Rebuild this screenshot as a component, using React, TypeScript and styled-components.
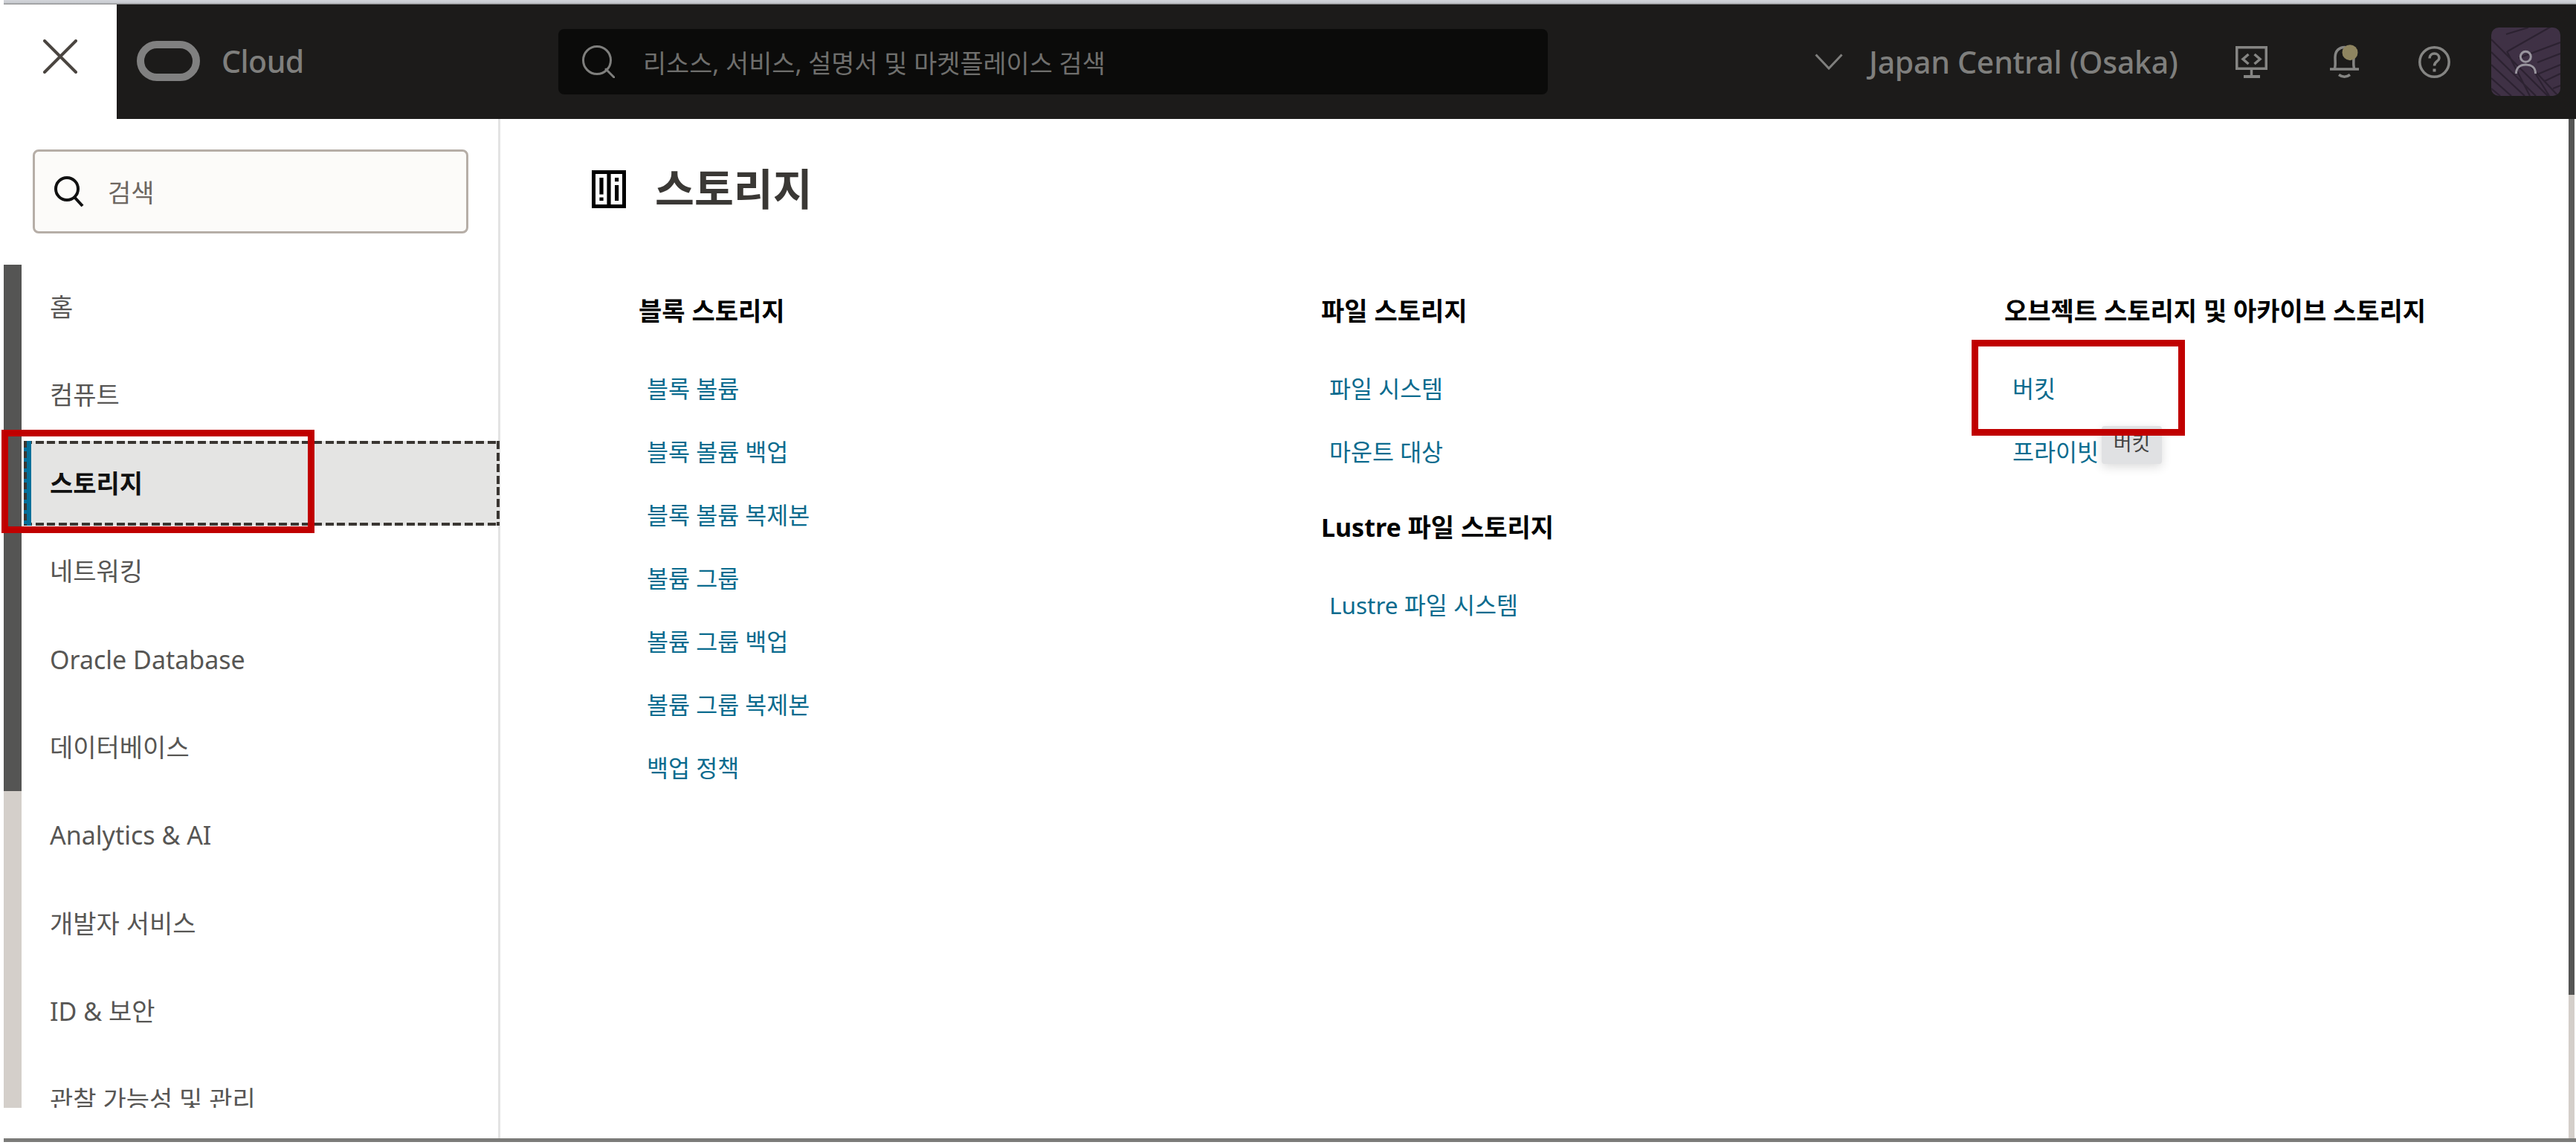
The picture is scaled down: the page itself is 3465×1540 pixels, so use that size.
import React from "react";
import styled, { createGlobalStyle } from "styled-components";

const Global = createGlobalStyle`
  html, body { margin: 0; padding: 0; background: #fff; }
  * { box-sizing: border-box; }
  body { font-family: "Noto Sans", "Noto Sans CJK KR", sans-serif; }
`;

const Page = styled.div`
  width: 3465px;
  height: 1540px;
  padding: 0 0 4px 5px;
  display: flex;
  flex-direction: column;
  overflow: hidden;
  background: #fff;
`;
const TopStripe = styled.div`
  height: 6px;
  flex: none;
  background: linear-gradient(#d3d5da 0, #c8cbd0 65%, #7d7d7d 100%);
`;
const Header = styled.header`
  height: 154px;
  flex: none;
  display: flex;
`;
const CloseCell = styled.button`
  width: 152px;
  flex: none;
  border: 0;
  padding: 0 0 14px 0;
  background: #fff;
  display: flex;
  align-items: center;
  justify-content: center;
`;
const Bar = styled.div`
  flex: 1;
  background: #1c1b1a;
  display: flex;
  align-items: center;
  position: relative;
`;
const Brand = styled.div`
  width: 594px;
  flex: none;
  padding-left: 27px;
  display: flex;
  align-items: center;
  gap: 29px;
  margin-top: -3px;
`;
const BrandText = styled.span`
  font-size: 41px;
  line-height: 50px;
  font-weight: 500;
  color: #7f7f7d;
  letter-spacing: -0.5px;
`;
const GlobalSearch = styled.div`
  width: 1331px;
  height: 88px;
  flex: none;
  border-radius: 8px;
  background: #0b0b0a;
  padding-left: 32px;
  display: flex;
  align-items: center;
  gap: 38px;
`;
const SearchHint = styled.span`
  font-size: 33.8px;
  color: #6f6f6d;
`;
const Tools = styled.div`
  flex: 1;
  display: flex;
  align-items: center;
`;
const Region = styled.div`
  margin-left: 359px;
  display: flex;
  align-items: center;
  gap: 35px;
`;
const RegionText = styled.span`
  font-size: 41px;
  line-height: 52px;
  font-weight: 500;
  color: #7f7f7d;
  letter-spacing: -0.25px;
`;
const ToolIcon = styled.span<{ $gap: number }>`
  display: flex;
  margin-left: ${(p) => p.$gap}px;
`;
const Avatar = styled.div`
  width: 93px;
  height: 92px;
  margin-left: 55px;
  border-radius: 10px;
  overflow: hidden;
  background: #3f3145;
  flex: none;
  svg { display: block; }
`;

const Body = styled.div`
  flex: 1;
  display: flex;
  min-height: 0;
`;
const Sidebar = styled.aside`
  width: 668px;
  flex: none;
  border-right: 3px solid #e3e3e3;
  display: flex;
  flex-direction: column;
`;
const SearchBox = styled.div`
  width: 586px;
  height: 113px;
  flex: none;
  margin: 41px 0 42px 39px;
  border: 3px solid #b6aea7;
  border-radius: 8px;
  background: #fcfbf9;
  padding-left: 26px;
  display: flex;
  align-items: center;
  gap: 32px;
`;
const SearchPlaceholder = styled.span`
  font-size: 34px;
  color: #6d6761;
`;
const NavArea = styled.div`
  display: flex;
  height: 1134px;
  flex: none;
`;
const Track = styled.div<{ $width: number; $height: number }>`
  width: ${(p) => p.$width}px;
  height: ${(p) => p.$height}px;
  flex: none;
  background: #d4cfca;
`;
const EdgeTrack = styled(Track)`
  margin-right: 2px;
`;
const Thumb = styled.div<{ $height: number }>`
  height: ${(p) => p.$height}px;
  background: #555554;
`;
const NavList = styled.nav`
  flex: 1;
  padding-left: 3px;
  display: flex;
  flex-direction: column;
  gap: 4.4px;
`;
const dash = (dir: string) =>
  `repeating-linear-gradient(${dir}, #3a3632 0 11px, transparent 11px 15.6px)`;
const NavRow = styled.div<{ $active?: boolean; $clip?: boolean }>`
  position: relative;
  width: 640px;
  height: ${(p) => (p.$clip ? "68px" : "114px")};
  flex: none;
  padding-left: 31px;
  border: 4px solid transparent;
  ${(p) => p.$clip && "border-bottom: 0;"}
  ${(p) =>
    p.$active
      ? `background:
          ${dash("90deg")} top / 100% 4px no-repeat,
          ${dash("90deg")} bottom / 100% 4px no-repeat,
          ${dash("180deg")} right / 4px 100% no-repeat,
          #e4e4e3;
         background-origin: border-box;`
      : ""}
  font-size: 34px;
  line-height: 106px;
  font-weight: ${(p) => (p.$active ? 700 : 400)};
  color: ${(p) => (p.$active ? "#111" : "#575654")};
  overflow: ${(p) => (p.$clip ? "hidden" : "visible")};
  white-space: nowrap;
`;
const ActiveBar = styled.span`
  position: absolute;
  left: -4px;
  top: -4px;
  bottom: -4px;
  width: 10px;
  background:
    repeating-linear-gradient(180deg, #3a3632 0 9px, transparent 9px 14px) left / 4px 100% no-repeat,
    #04709a;
`;
const RedBox = styled.span<{ $l: number; $t: number; $w: number; $h: number }>`
  position: absolute;
  left: ${(p) => p.$l}px;
  top: ${(p) => p.$t}px;
  width: ${(p) => p.$w}px;
  height: ${(p) => p.$h}px;
  border: 9px solid #c00000;
  z-index: 3;
  pointer-events: none;
`;

const Main = styled.main`
  flex: 1;
  min-width: 0;
  padding: 67px 0 0 123px;
`;
const TitleRow = styled.div`
  height: 54px;
  display: flex;
  align-items: center;
  gap: 39px;
`;
const Title = styled.h1`
  margin: 0;
  font-size: 57.5px;
  line-height: 54px;
  font-weight: 700;
  color: #3a3835;
`;
const Columns = styled.div`
  margin: 117px 0 0 63px;
  display: flex;
`;
const Column = styled.section<{ $w: number }>`
  width: ${(p) => p.$w}px;
  flex: none;
`;
const Heading = styled.h2<{ $spaced?: boolean }>`
  margin: ${(p) => (p.$spaced ? "39px" : "0")} 0 42px;
  font-size: 34px;
  line-height: 40px;
  font-weight: 700;
  color: #000;
  white-space: nowrap;
`;
const LinkItem = styled.div`
  position: relative;
  height: 85px;
  padding-left: 11px;
  font-size: 31.5px;
  line-height: 85px;
  color: #0a6b8e;
  white-space: nowrap;
`;
const Tip = styled.div`
  position: absolute;
  left: 131px;
  top: 8px;
  width: 81px;
  height: 51px;
  background: #e0e1e3;
  border-radius: 4px;
  box-shadow: 0 4px 14px rgba(0, 0, 0, 0.14);
  color: #444;
  font-size: 27px;
  line-height: 24px;
  padding-top: 11px;
  text-align: center;
  z-index: 2;
`;
const BottomLine = styled.div`
  height: 5px;
  flex: none;
  background: #7b7b79;
`;

const CloseIcon = () => (
  <svg width="46" height="46" viewBox="0 0 46 46" fill="none" stroke="#4a4540" strokeWidth="4" strokeLinecap="round">
    <path d="M2 2 44 44M44 2 2 44" />
  </svg>
);
const OracleLogo = () => (
  <svg width="85" height="54" viewBox="0 0 85 54" fill="none" stroke="#808080" strokeWidth="10">
    <rect x="5" y="5" width="75" height="44" rx="22" />
  </svg>
);
const DarkSearchIcon = () => (
  <svg width="44" height="44" viewBox="0 0 44 44" fill="none" stroke="#7f7f7d" strokeWidth="3">
    <circle cx="20" cy="20" r="18.5" />
    <path d="M32 32 43 43" strokeLinecap="round" />
  </svg>
);
const LightSearchIcon = () => (
  <svg width="40" height="41" viewBox="0 0 40 41" fill="none" stroke="#111" strokeWidth="4">
    <circle cx="17" cy="17" r="15" />
    <path d="M27 28 38 40" />
  </svg>
);
const ChevronIcon = () => (
  <svg width="38" height="22" viewBox="0 0 38 22" fill="none" stroke="#7f7f7d" strokeWidth="3">
    <path d="M1.5 1.5 19 20 36.5 1.5" />
  </svg>
);
const MonitorIcon = () => (
  <svg width="43" height="43" viewBox="0 0 43 43" fill="none" stroke="#858583" strokeWidth="3.5">
    <rect x="1.75" y="1.75" width="39.5" height="28.5" />
    <path d="M17.5 11 10 17.5 17.5 24M25.5 11 33 17.5 25.5 24" />
    <path d="M21.5 32v7" />
    <path d="M11 41h22" strokeWidth="4" />
  </svg>
);
const BellIcon = () => (
  <svg width="39" height="43" viewBox="0 0 39 43" fill="none" stroke="#858583" strokeWidth="3.5" style={{ overflow: "visible" }}>
    <path d="M6 31C8 27 7 22 7 15 7 6 13 1.5 19.5 1.5 26 1.5 32 6 32 15 32 22 31 27 33 31" />
    <path d="M0 31h39" />
    <path d="M12 38.5Q19.5 44 27 38.5" />
    <circle cx="27" cy="8.7" r="10.5" fill="#8f8560" stroke="none" />
  </svg>
);
const HelpIcon = () => (
  <svg width="43" height="43" viewBox="0 0 43 43" fill="none" stroke="#858583" strokeWidth="3.5">
    <circle cx="21.5" cy="21.5" r="19.7" />
    <path d="M15 16.5C15 12.5 18 10 21.5 10 25 10 28 12.5 28 16 28 20.5 21.5 20.5 21.5 26.5" />
    <path d="M19.5 32.5h4" strokeWidth="4" />
  </svg>
);
const AvatarArt = () => (
  <svg width="93" height="92" viewBox="0 0 93 92" fill="none">
    <g stroke="#2c2231" strokeWidth="2.2">
      <path d="M20 9 50 0M22 32 80-1M37 41 93 20M62 47 93 35M62 63 93 50M72 72 93 62M83 82 93 78" />
      <path d="M0 16 76 92M0 33 60 92M0 50 45 92M0 68 27 92M0 82 12 92M21 32 52 92M47 46 90 92M60 63 78 92" />
    </g>
    <circle cx="46.3" cy="39.3" r="7" stroke="#99959e" strokeWidth="3" />
    <path d="M33.5 62C33.5 54 39 50 46.5 50 54 50 59.5 54 59.5 62" stroke="#99959e" strokeWidth="3" />
  </svg>
);
const StorageIcon = () => (
  <svg width="46" height="51" viewBox="0 0 46 51" fill="#000">
    <rect x="2.5" y="2.5" width="41" height="46" fill="none" stroke="#000" strokeWidth="5" />
    <rect x="20.4" y="4" width="5.2" height="43" />
    <rect x="10.4" y="10" width="5.2" height="22.5" />
    <rect x="10.4" y="36.5" width="5.2" height="4.5" />
    <rect x="31" y="10" width="5.2" height="5.2" />
    <rect x="31" y="20" width="5.2" height="21" />
  </svg>
);

const navItems = ["홈", "컴퓨트", "스토리지", "네트워킹", "Oracle Database", "데이터베이스", "Analytics & AI", "개발자 서비스", "ID & 보안", "관찰 가능성 및 관리"];
const blockLinks = ["블록 볼륨", "블록 볼륨 백업", "블록 볼륨 복제본", "볼륨 그룹", "볼륨 그룹 백업", "볼륨 그룹 복제본", "백업 정책"];

export default function App() {
  return (
    <Page>
      <Global />
      <TopStripe />
      <Header>
        <CloseCell aria-label="닫기"><CloseIcon /></CloseCell>
        <Bar>
          <Brand><OracleLogo /><BrandText>Cloud</BrandText></Brand>
          <GlobalSearch>
            <DarkSearchIcon />
            <SearchHint>리소스, 서비스, 설명서 및 마켓플레이스 검색</SearchHint>
          </GlobalSearch>
          <Tools>
            <Region><ChevronIcon /><RegionText>Japan Central (Osaka)</RegionText></Region>
            <ToolIcon $gap={77}><MonitorIcon /></ToolIcon>
            <ToolIcon $gap={84}><BellIcon /></ToolIcon>
            <ToolIcon $gap={80}><HelpIcon /></ToolIcon>
            <Avatar><AvatarArt /></Avatar>
          </Tools>
        </Bar>
      </Header>
      <Body>
        <Sidebar>
          <SearchBox><LightSearchIcon /><SearchPlaceholder>검색</SearchPlaceholder></SearchBox>
          <NavArea>
            <Track $width={24} $height={1134}><Thumb $height={708} /></Track>
            <NavList>
              {navItems.map((item, i) => (
                <NavRow key={item} $active={i === 2} $clip={i === 9}>
                  {i === 2 && <ActiveBar />}
                  {i === 2 && <RedBox $l={-34} $t={-19} $w={421} $h={139} />}
                  {item}
                </NavRow>
              ))}
            </NavList>
          </NavArea>
        </Sidebar>
        <Main>
          <TitleRow><StorageIcon /><Title>스토리지</Title></TitleRow>
          <Columns>
            <Column $w={918}>
              <Heading>블록 스토리지</Heading>
              {blockLinks.map((l) => <LinkItem key={l}>{l}</LinkItem>)}
            </Column>
            <Column $w={919}>
              <Heading>파일 스토리지</Heading>
              <LinkItem>파일 시스템</LinkItem>
              <LinkItem>마운트 대상</LinkItem>
              <Heading $spaced>Lustre 파일 스토리지</Heading>
              <LinkItem>Lustre 파일 시스템</LinkItem>
            </Column>
            <Column $w={700}>
              <Heading>오브젝트 스토리지 및 아카이브 스토리지</Heading>
              <LinkItem>
                버킷
                <RedBox $l={-44} $t={-23} $w={287} $h={129} />
              </LinkItem>
              <LinkItem>
                프라이빗
                <Tip>버킷</Tip>
              </LinkItem>
            </Column>
          </Columns>
        </Main>
        <EdgeTrack $width={8} $height={1371}><Thumb $height={1178} /></EdgeTrack>
      </Body>
      <BottomLine />
    </Page>
  );
}
